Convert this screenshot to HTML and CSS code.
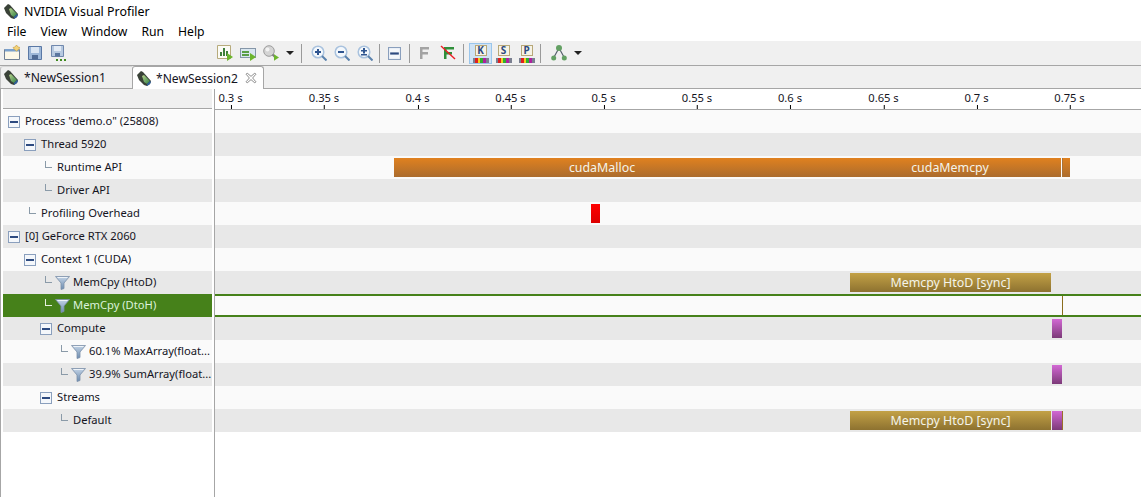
FILE: index.html
```html
<!DOCTYPE html>
<html lang="en">
<head>
    <meta charset="UTF-8">
    <meta name="viewport" content="width=device-width, initial-scale=1.0">
    <title>NVIDIA Visual Profiler</title>
    <link rel="stylesheet" href="styles.css">
</head>
<body>
    <svg class="defs" width="0" height="0">
        <defs>
            <linearGradient id="bodyGreen" x1="0" y1="0" x2="1" y2="1">
                <stop offset="0" stop-color="#b9d48e"/>
                <stop offset="1" stop-color="#2f7f42"/>
            </linearGradient>
            <linearGradient id="funnelFill" x1="0" y1="0" x2="0" y2="1">
                <stop offset="0" stop-color="#c4d4e6"/>
                <stop offset="1" stop-color="#6c8cb0"/>
            </linearGradient>
            <symbol id="nv" viewBox="0 0 14 15">
                <path d="M0 4 4 0 6 1 14 10 13 13 10 15 7 14 2 9Z" fill="#3a4238"/>
                <path d="M5 5 7 4 13 10 10 13 7 11Z" fill="url(#bodyGreen)"/>
                <path d="M10 13 13 10 14 11 13 13 10 15Z" fill="#2f5f9a"/>
            </symbol>
            <symbol id="box" viewBox="0 0 12 12">
                <rect x=".5" y=".5" width="11" height="11" fill="#f4f7fb" stroke="#8a9fbd"/>
                <rect x="2" y="5" width="8" height="2" fill="#2d4a80"/>
            </symbol>
            <symbol id="funnel" viewBox="0 0 15 15">
                <path d="M.5 1.500h14L9 8v5.500L6 14.500V8Z" fill="url(#funnelFill)" stroke="#7b8fa8" stroke-width=".8"/>
                <path d="M2.500 2.500h10" stroke="#eef3f8"/>
            </symbol>
            <symbol id="glass" viewBox="0 0 16 16">
                <circle cx="7" cy="7" r="5.800" fill="#f4f8fc" stroke="#a9c2de" stroke-width="1.500"/>
                <path d="M11 11 15.500 15.500" stroke="#5b82ad" stroke-width="2"/>
            </symbol>
            <symbol id="play" viewBox="0 0 6 8">
                <path d="M0 0 6 4 0 8Z" fill="#6cb52d"/>
            </symbol>
        </defs>
    </svg>

    <div class="app">
        <div class="titlebar">
            <svg class="title-logo"><use href="#nv"/></svg>
            <span>NVIDIA Visual Profiler</span>
        </div>

        <div class="menubar">
            <span>File</span>
            <span>View</span>
            <span>Window</span>
            <span>Run</span>
            <span>Help</span>
        </div>

        <div class="toolbar">
            <span class="tool"><svg viewBox="0 0 16 16">
                <path d="M.5 4.500h15v10H.5Z" fill="#fdf8e8" stroke="#6f7f95"/>
                <rect x="1" y="4" width="14" height="2.500" fill="#7aa0cc"/>
                <path d="M12.500 0 14 2 16 2.500 14.500 4.500 12.500 6 10.500 4.500 9 2.500 11 2Z" fill="#f3d37a" stroke="#c79a34" stroke-width=".6"/>
            </svg></span>
            <span class="tool"><svg viewBox="0 0 16 16">
                <path d="M1.500 1.500h13v13h-13Z" fill="#9db7d8" stroke="#5a78a5"/>
                <rect x="4" y="2" width="8" height="6" fill="#dbe6f3"/>
                <rect x="5" y="10" width="6" height="4.500" fill="#4f6a94"/>
            </svg></span>
            <span class="tool"><svg viewBox="0 0 16 16">
                <path d="M1.500 .5h12v11h-12Z" fill="#b7c9e0" stroke="#7088ad"/>
                <rect x="4" y="1" width="7" height="5" fill="#e3ebf5"/>
                <rect x="5" y="8" width="5" height="3.500" fill="#5b769f"/>
                <path d="M6 14h2v2H6Zm4 0h2v2h-2Zm4 0h2v2h-2Z" fill="#3f8a1f"/>
            </svg></span>

            <span class="tool tool-push"><svg viewBox="0 0 16 16">
                <path d="M.5 .5h13v13H.5Z" fill="#fbfbf6" stroke="#b7ab7c"/>
                <path d="M3 11V7h2v4Zm3 0V3h2v8Zm3 0V6h2v5Z" fill="#3e7f3a"/>
                <use href="#play" x="10" y="8" width="6" height="8"/>
            </svg></span>
            <span class="tool"><svg viewBox="0 0 16 16">
                <rect x=".5" y="3.500" width="15" height="9" fill="#d9e6f0" stroke="#8596a8"/>
                <rect x="2" y="6" width="7" height="2" fill="#5a9e46"/>
                <rect x="2" y="9" width="7" height="2" fill="#5a9e46"/>
                <use href="#play" x="10" y="8" width="6" height="8"/>
            </svg></span>
            <span class="tool"><svg viewBox="0 0 16 16">
                <circle cx="6" cy="6" r="5.300" fill="#d4d4d4" stroke="#9c9c9c"/>
                <circle cx="4.500" cy="4.500" r="2" fill="#f2f2f2"/>
                <path d="M9.500 9.500 13 13" stroke="#7d7d7d" stroke-width="2"/>
                <use href="#play" x="11" y="9" width="5" height="7"/>
            </svg></span>
            <span class="tool tool-arrow"><i class="caret"></i></span>

            <i class="sep sep-a"></i>

            <span class="tool"><svg viewBox="0 0 16 16">
                <use href="#glass"/>
                <path d="M4 6h6v2H4Zm2-2h2v6H6Z" fill="#2f5590"/>
            </svg></span>
            <span class="tool"><svg viewBox="0 0 16 16">
                <use href="#glass"/>
                <path d="M4 6h6v2H4Z" fill="#2f5590"/>
            </svg></span>
            <span class="tool"><svg viewBox="0 0 16 16">
                <use href="#glass"/>
                <path d="M4 5h6v1.500H4Zm2-2h2v5.500H6ZM4 9h6v1.500H4Z" fill="#2f5590"/>
            </svg></span>

            <i class="sep"></i>

            <span class="tool"><svg class="minus-tool" viewBox="0 0 12 12"><use href="#box"/></svg></span>

            <i class="sep"></i>

            <span class="tool"><svg viewBox="0 0 16 16">
                <path d="M3 2h9v2.500H5.500V7H11v2.500H5.500V14H3Z" fill="#a3a3a3"/>
            </svg></span>
            <span class="tool"><svg viewBox="0 0 16 16">
                <path d="M4 2h10v2.500H6.500V7H12v2.500H6.500V14H4Z" fill="#2f8f3a"/>
                <path d="M1 1 15 14" stroke="#ee1c24" stroke-width="1.400"/>
            </svg></span>

            <i class="sep sep-b"></i>

            <span class="mode mode-on">
                <b class="key">K</b>
                <i class="rainbow"></i>
            </span>
            <span class="mode">
                <b class="key">S</b>
                <i class="rainbow"></i>
            </span>
            <span class="mode">
                <b class="key">P</b>
                <i class="rainbow"></i>
            </span>

            <i class="sep sep-c"></i>

            <span class="tool"><svg viewBox="0 0 16 16">
                <path d="M8 3 2.500 13M8 3 13.500 13" stroke="#55606c" stroke-width="1.200" fill="none"/>
                <circle cx="8" cy="3" r="3" fill="#63a063"/>
                <circle cx="2.700" cy="13" r="2.500" fill="#63a063"/>
                <circle cx="13.300" cy="13" r="2.500" fill="#63a063"/>
            </svg></span>
            <span class="tool tool-arrow"><i class="caret"></i></span>
        </div>

        <div class="tabs">
            <div class="tab">
                <svg class="tab-logo"><use href="#nv"/></svg>
                <span>*NewSession1</span>
            </div>
            <div class="tab tab-on">
                <svg class="tab-logo"><use href="#nv"/></svg>
                <span>*NewSession2</span>
                <svg class="tab-close" viewBox="0 0 11 11">
                    <path d="M1 2 2 1 5.500 4 9 1 10 2 7 5.500 10 9 9 10 5.500 7 2 10 1 9 4 5.500Z" fill="#fff" stroke="#8c8c8c" stroke-width=".9"/>
                </svg>
            </div>
        </div>

        <div class="main">
            <div class="tree">
                <div class="tree-head"></div>

                <div class="row lv0"><svg class="twist"><use href="#box"/></svg><span>Process "demo.o" (25808)</span></div>
                <div class="row lv1 alt"><svg class="twist"><use href="#box"/></svg><span>Thread 5920</span></div>
                <div class="row lv2"><i class="conn"></i><span>Runtime API</span></div>
                <div class="row lv2 alt"><i class="conn"></i><span>Driver API</span></div>
                <div class="row lv1"><i class="conn"></i><span>Profiling Overhead</span></div>
                <div class="row lv0 alt"><svg class="twist"><use href="#box"/></svg><span>[0] GeForce RTX 2060</span></div>
                <div class="row lv1"><svg class="twist"><use href="#box"/></svg><span>Context 1 (CUDA)</span></div>
                <div class="row lv2 alt"><i class="conn"></i><svg class="filter"><use href="#funnel"/></svg><span>MemCpy (HtoD)</span></div>
                <div class="row lv2 picked"><i class="conn"></i><svg class="filter"><use href="#funnel"/></svg><span>MemCpy (DtoH)</span></div>
                <div class="row lv2 alt"><svg class="twist"><use href="#box"/></svg><span>Compute</span></div>
                <div class="row lv3"><i class="conn"></i><svg class="filter"><use href="#funnel"/></svg><span>60.1% MaxArray(float...</span></div>
                <div class="row lv3 alt"><i class="conn"></i><svg class="filter"><use href="#funnel"/></svg><span>39.9% SumArray(float...</span></div>
                <div class="row lv2"><svg class="twist"><use href="#box"/></svg><span>Streams</span></div>
                <div class="row lv3 alt"><i class="conn"></i><span>Default</span></div>
            </div>

            <div class="timeline">
                <div class="ruler">
                    <span class="tick" style="left: 15.5px">0.3 s</span>
                    <span class="tick" style="left: 109px">0.35 s</span>
                    <span class="tick" style="left: 202.500px">0.4 s</span>
                    <span class="tick" style="left: 295.500px">0.45 s</span>
                    <span class="tick" style="left: 388.500px">0.5 s</span>
                    <span class="tick" style="left: 482px">0.55 s</span>
                    <span class="tick" style="left: 575px">0.6 s</span>
                    <span class="tick" style="left: 668.500px">0.65 s</span>
                    <span class="tick" style="left: 761.500px">0.7 s</span>
                    <span class="tick" style="left: 854.500px">0.75 s</span>
                </div>

                <div class="track"></div>
                <div class="track alt"></div>
                <div class="track">
                    <div class="bar orange" style="left: 179px; width: 416px">cudaMalloc</div>
                    <div class="bar orange bar-pad" style="left: 595px; width: 251px">cudaMemcpy</div>
                    <div class="bar orange bar-tail" style="left: 847px; width: 8px"></div>
                </div>
                <div class="track alt"></div>
                <div class="track">
                    <div class="bar red" style="left: 376px; width: 9px"></div>
                </div>
                <div class="track alt"></div>
                <div class="track"></div>
                <div class="track alt">
                    <div class="bar gold" style="left: 635px; width: 201px">Memcpy HtoD [sync]</div>
                </div>
                <div class="track picked">
                    <i class="marker" style="left: 847px"></i>
                </div>
                <div class="track alt">
                    <div class="bar purple" style="left: 837px; width: 10px"></div>
                </div>
                <div class="track"></div>
                <div class="track alt">
                    <div class="bar purple" style="left: 837px; width: 10px"></div>
                </div>
                <div class="track"></div>
                <div class="track alt">
                    <div class="bar gold" style="left: 635px; width: 201px">Memcpy HtoD [sync]</div>
                    <div class="bar purple bar-edge" style="left: 837px; width: 11px"></div>
                </div>
            </div>
        </div>
    </div>
</body>
</html>
```

FILE: styles.css
```css
* {
    box-sizing: border-box;
}
body {
    margin: 0;
    background-color: #fff;
    color: #14141e;
    font-family: "Noto Sans", sans-serif;
    font-size: 11.2px;
    overflow: hidden;
}
.defs {
    position: absolute;
}
.app {
    width: 1141px;
    height: 497px;
    display: flex;
    flex-direction: column;
}

.titlebar {
    height: 22px;
    display: flex;
    align-items: center;
    padding-left: 4px;
    gap: 6px;
    font-size: 12.4px;
    color: #000;
}
.title-logo {
    width: 14px;
    height: 15px;
}

.menubar {
    height: 19px;
    display: flex;
    align-items: center;
    padding-left: 7px;
    gap: 14px;
    font-size: 12.2px;
    color: #000;
}

.toolbar {
    height: 24px;
    display: flex;
    align-items: center;
    background-color: #f0f0f0;
}
.tool {
    width: 23px;
    height: 22px;
    display: flex;
    align-items: center;
    justify-content: center;
}
.tool svg {
    width: 16px;
    height: 16px;
}
.tool .minus-tool {
    width: 13px;
    height: 13px;
}
.tool-push {
    margin-left: 144px;
}
.tool-arrow {
    width: 16px;
}
.caret {
    width: 0;
    height: 0;
    border-left: 4px solid transparent;
    border-right: 4px solid transparent;
    border-top: 4px solid #222;
}
.sep {
    width: 1px;
    height: 19px;
    margin: 0 3px;
    background-color: #9a9a9a;
}
.sep-a {
    margin-right: 5px;
}
.sep-b {
    margin: 0 5px 0 4px;
}
.sep-c {
    margin: 0 6px 0 2px;
}

.mode {
    width: 23px;
    height: 21px;
    display: flex;
    flex-direction: column;
    align-items: center;
    gap: 2px;
    padding-top: 1px;
    border: 1px solid transparent;
}
.mode-on {
    background-color: #cfe3f5;
    border-color: #9ac6ec;
}
.key {
    width: 12px;
    height: 11px;
    background-color: #f6f3e6;
    border: 1px solid #b8a878;
    color: #2d4a80;
    font-size: 10px;
    line-height: 9px;
    text-align: center;
}
.rainbow {
    width: 16px;
    height: 5px;
    background: linear-gradient(to right, #7a7f90 0 2px, #e02020 2px 5px, #f0d020 5px 7px, #30b030 7px 10px, #b020a0 10px 13px, #7a7f90 13px);
}

.tabs {
    height: 24px;
    display: flex;
    align-items: flex-end;
    background-color: #f0f0f0;
    border-top: 1px solid #a6a6a6;
    border-bottom: 1px solid #a6a6a6;
}
.tab {
    width: 132px;
    height: 22px;
    display: flex;
    align-items: center;
    gap: 6px;
    padding-left: 3px;
    border-left: 1px solid #c4c4c4;
    border-top: 1px solid #d8d8d8;
    border-radius: 3px 0 0 0;
    font-size: 12.1px;
}
.tab-on {
    width: 132px;
    height: 23px;
    margin-bottom: -1px;
    padding-left: 4px;
    gap: 5px;
    background-color: #fff;
    border: 1px solid #a6a6a6;
    border-bottom: 0;
    border-radius: 3px 3px 0 0;
}
.tab-logo {
    width: 14px;
    height: 15px;
}
.tab-close {
    width: 12px;
    height: 12px;
    margin-left: 2px;
}

.main {
    flex: 1;
    display: flex;
    border-left: 1px solid #a6a6a6;
    min-height: 0;
}
.tree {
    width: 214px;
    padding-left: 2px;
    padding-right: 2px;
    border-right: 1px solid #a6a6a6;
    flex: none;
}
.tree-head {
    height: 20px;
    background-color: #f0f0f0;
    border-bottom: 1px solid #a6a6a6;
    margin-bottom: 1px;
}
.row {
    height: 23px;
    display: flex;
    align-items: center;
    white-space: nowrap;
    background-color: #fafafa;
}
.row span {
    margin-bottom: 2px;
}
.row.alt {
    background-color: #e8e8e8;
}
.row.picked {
    background-color: #46811a;
    color: #dcf2dc;
}
.lv0 {
    padding-left: 5px;
}
.lv1 {
    padding-left: 21px;
}
.lv2 {
    padding-left: 37px;
}
.lv3 {
    padding-left: 53px;
}
.twist {
    width: 12px;
    height: 12px;
    margin-right: 5px;
    flex: none;
}
.conn {
    width: 17px;
    height: 7px;
    margin-top: -6px;
    flex: none;
    position: relative;
}
.conn::before {
    content: "";
    position: absolute;
    left: 5px;
    top: 0;
    width: 6px;
    height: 6px;
    border-left: 1px solid #8a9aa8;
    border-bottom: 1px solid #8a9aa8;
}
.picked .conn::before {
    border-color: #e6f2e0;
}
.filter {
    width: 15px;
    height: 15px;
    margin: 0 3px 0 -2px;
    flex: none;
}

.timeline {
    flex: 1;
    min-width: 0;
}
.ruler {
    height: 21px;
    position: relative;
    background-color: #fff;
    border-bottom: 1px solid #a6a6a6;
}
.tick {
    position: absolute;
    top: 0;
    transform: translateX(-50%);
    white-space: nowrap;
    font-size: 11.2px;
    line-height: 17px;
}
.tick::after {
    content: "";
    position: absolute;
    left: 50%;
    top: 16px;
    width: 1px;
    height: 4px;
    background-color: #000;
}
.track {
    height: 23px;
    position: relative;
    background-color: #fafafa;
}
.track.alt {
    background-color: #e8e8e8;
}
.track.picked {
    border-top: 2px solid #46811a;
    border-bottom: 2px solid #46811a;
}
.bar {
    position: absolute;
    top: 2px;
    height: 19px;
    line-height: 19px;
    text-align: center;
    white-space: nowrap;
    overflow: hidden;
    color: #f4f4ea;
    font-size: 12.4px;
}
.orange {
    background: linear-gradient(#e0811f, #ab6c2e);
}
.bar-pad {
    padding-left: 29px;
}
.bar-tail {
    border-left: 1px solid #a97238;
}
.gold {
    background: linear-gradient(#c3a146, #8d7230);
}
.purple {
    background: linear-gradient(#d268d4, #7c3a78);
}
.bar-edge {
    border-right: 1px solid #9a6f28;
}
.red {
    background: linear-gradient(#ff0000, #dc0000);
}
.marker {
    position: absolute;
    top: 0;
    bottom: 0;
    width: 1px;
    background-color: #8a6d1c;
}
```
